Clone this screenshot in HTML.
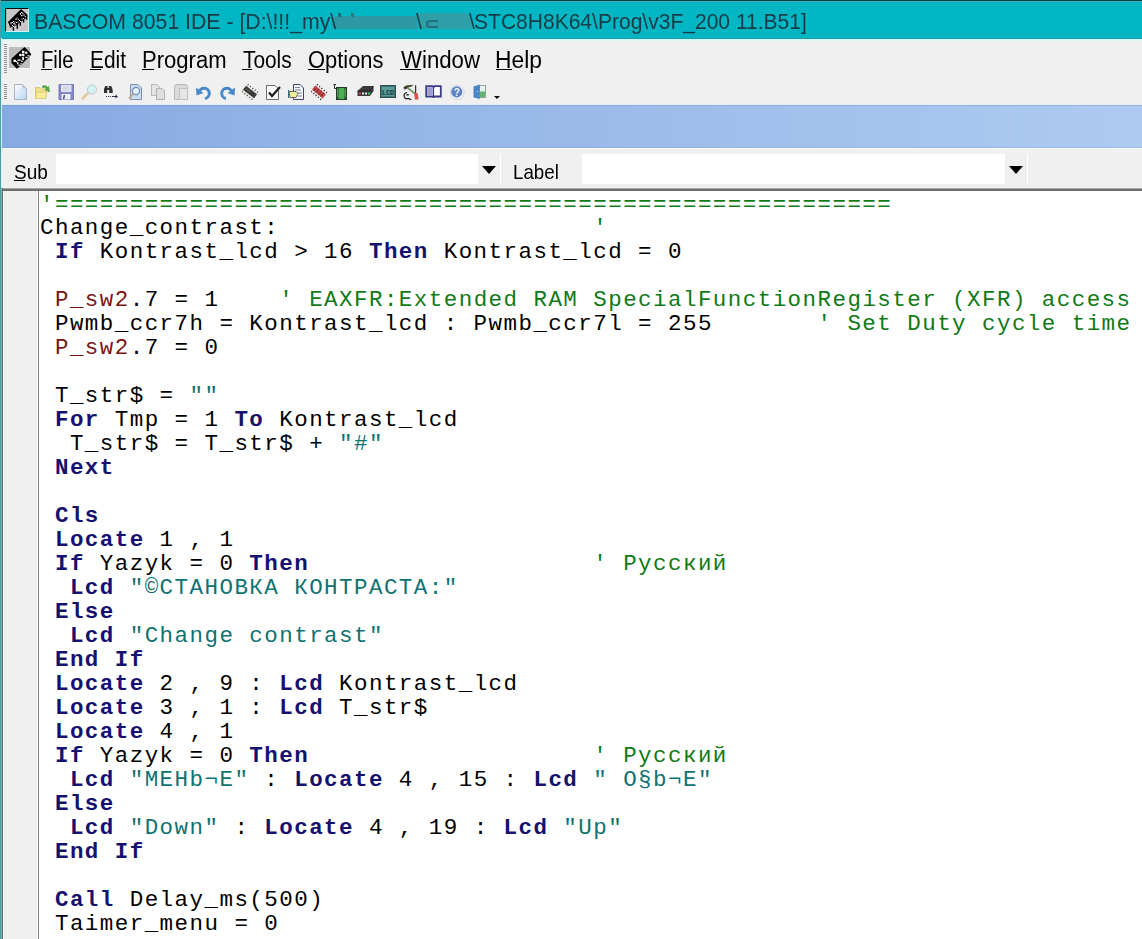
<!DOCTYPE html>
<html><head><meta charset="utf-8">
<style>
html,body{margin:0;padding:0;}
body{width:1142px;height:939px;overflow:hidden;position:relative;background:#f0f0f0;font-family:"Liberation Sans",sans-serif;}
.abs{position:absolute;}
#title{position:absolute;left:0;top:0;width:1142px;height:38px;background:linear-gradient(to bottom,#0a4048 0 1px,#3fb0b8 1px 2px,#0ab0be 2px 3px,#02b6c4 3px);}
#titletxt{position:absolute;left:35px;top:5px;font-size:21.5px;color:#173c47;white-space:nowrap;letter-spacing:-0.1px;}
#tline{position:absolute;left:0;top:38px;width:1142px;height:3px;background:linear-gradient(to bottom,#2b99a0 0 1px,#c8fcfe 1px 2px,#e4f4f8 2px 3px);}
#lborder{position:absolute;left:0;top:0;width:1px;height:939px;background:#4f9ea2;}
#lborder2{position:absolute;left:1px;top:38px;width:1px;height:150px;background:#c8f6fa;}
#lborder3{position:absolute;left:1px;top:188px;width:1px;height:751px;background:#76b2b4;}
.tx{position:absolute;line-height:1;white-space:nowrap;transform-origin:0 0;}
.ul{position:absolute;height:1px;background:#000;}
.u{text-decoration:underline;text-underline-offset:3px;text-decoration-thickness:1px;}
#band{position:absolute;left:2px;top:105px;width:1140px;height:43px;background:linear-gradient(to right,#87aae2,#aecaf1);}
#bandtop{position:absolute;left:2px;top:104px;width:1140px;height:1px;background:#e4eef8;}
#bandbot{position:absolute;left:2px;top:148px;width:1140px;height:1px;background:#f8fbfd;}
.combo{position:absolute;top:154px;height:30px;background:#fff;}
.btn{position:absolute;top:154px;height:30px;width:22px;background:#f0f0f0;border-right:1px solid #fff;}
.arrow{position:absolute;width:0;height:0;border-left:7px solid transparent;border-right:7px solid transparent;border-top:8px solid #000;}
.lbl{position:absolute;top:160px;font-size:19px;color:#000;}
#hl1{position:absolute;left:2px;top:188px;width:1140px;height:1px;background:#a8a8a8;}
#hl2{position:absolute;left:2px;top:189px;width:1140px;height:2px;background:#6e6e6e;}
#vl{position:absolute;left:2px;top:188px;width:1px;height:751px;background:#5e7076;}
#gutter{position:absolute;left:3px;top:191px;width:35px;height:748px;background:#efefef;border-left:1px solid #f6f9fe;box-sizing:border-box;}
#gline{position:absolute;left:37px;top:191px;width:2px;height:748px;background:linear-gradient(to right,#fff 0 1px,#7e7e7e 1px 2px);}
#editor{position:absolute;left:39px;top:191px;width:1103px;height:748px;background:#fff;overflow:hidden;}
#code{position:absolute;left:1px;top:0.5px;font-family:"Liberation Mono",monospace;font-size:22.5px;letter-spacing:1.45px;color:#000;white-space:pre;}
.ln{position:absolute;left:0;height:24px;line-height:24px;}
.k{color:#16116e;font-weight:bold;}
.s{color:#0f7272;}
.c{color:#0f7a16;}
.r{color:#7a1414;}
.grip{position:absolute;left:4px;width:3px;background:repeating-linear-gradient(to bottom,#8e8e8e 0 1px,transparent 1px 2px);}
.ico{position:absolute;top:84px;width:16px;height:16px;}
</style></head><body>
<div id="title"></div>
<div id="tline"></div>
<svg class="abs" style="left:5px;top:8px" width="24" height="24" viewBox="0 0 24 24">
<rect x="0" y="0" width="24" height="24" fill="#c8c8c8"/>
<path d="M0.5 24V0.5H24" fill="none" stroke="#0a0a0a" stroke-width="1.2"/><path d="M23.5 0.5V23.5H0.5" fill="none" stroke="#c8f4f8" stroke-width="1"/>
<path d="M3 14L16 1L22.3 6.8L22.3 9L9 19L5 18.5Z" fill="#000"/>
<g stroke="#000" stroke-width="1.4"><path d="M5.5 17V19.5M8.4 17V22.8M12.3 15V20.7M15.3 12V17.7M18.6 9V14.4M21.6 7V11.7"/></g>
<g fill="#fff"><rect x="15" y="5" width="1" height="1.8"/><rect x="16" y="4" width="1.5" height="1"/><rect x="17.5" y="5" width="1" height="1"/><rect x="16" y="7.2" width="1.6" height="1"/><rect x="18.5" y="6.2" width="1" height="1.6"/><rect x="19.8" y="8" width="1" height="1"/>
<rect x="10.5" y="10.5" width="1" height="1.6"/><rect x="11.5" y="9.6" width="1" height="1"/><rect x="12.8" y="10.8" width="1" height="1"/><rect x="14" y="12" width="1" height="1"/><rect x="15" y="13" width="1" height="1"/><rect x="16.5" y="10.5" width="1" height="1"/><rect x="18" y="10" width="1" height="1"/>
<rect x="8" y="13" width="1" height="1"/><rect x="9.5" y="13.5" width="1" height="1"/><rect x="11" y="14" width="1" height="1"/><rect x="12.5" y="13.5" width="1" height="1"/>
<rect x="5.6" y="14" width="1" height="2.2"/><rect x="7" y="14" width="1" height="1"/><rect x="8.2" y="15.2" width="2" height="1"/><rect x="9.6" y="16.2" width="1" height="1.4"/><rect x="7" y="17" width="1" height="1"/><rect x="8" y="18" width="1.6" height="1"/></g>
</svg>
<div class="abs" style="left:332px;top:16px;width:85px;height:13px;background:#2b98a3;filter:blur(0.7px);border-radius:6px 0 0 2px"></div>
<div class="abs" style="left:338px;top:13px;width:3px;height:4px;background:#1f6f78;filter:blur(0.5px)"></div>
<div class="abs" style="left:351px;top:13px;width:3px;height:4px;background:#2a7a82;filter:blur(0.6px)"></div>
<div class="abs" style="left:418px;top:13px;width:53px;height:16px;background:#2e9fa9;filter:blur(0.7px);border-radius:4px 8px 2px 2px"></div>
<div class="abs" style="left:426px;top:20px;width:12px;height:8px;border:2px solid #1f707a;border-right:none;border-radius:6px 0 0 6px;filter:blur(0.5px);box-sizing:border-box"></div>
<div class="tx" style="left:34.14px;top:9.7px;font-size:22.8px;color:#173c47;transform:scaleX(0.9317);">BASCOM 8051 IDE - [D:\!!!_my\</div><div class="tx" style="left:416px;top:9.7px;font-size:22.8px;color:#173c47;transform:scaleX(0.93)">\</div><div class="tx" style="left:469px;top:9.7px;font-size:22.8px;color:#173c47;transform:scaleX(0.93)">\</div><div class="tx" style="left:474.08px;top:9.7px;font-size:22.8px;color:#173c47;transform:scaleX(0.9226);">STC8H8K64\Prog\v3F_200 11.B51]</div>
<div id="lborder"></div><div id="lborder2"></div><div id="lborder3"></div>

<div class="grip" style="top:44px;height:29px"></div>
<svg class="abs" style="left:9px;top:47px" width="22" height="22" viewBox="0 0 22 22">
<rect x="0" y="0" width="22" height="22" fill="#bdbdbd"/><path d="M21.5 0V21.5H0" fill="none" stroke="#fafafa"/>
<path d="M2.5 11.5L15.5 0L22 6.5L22 8L8.5 21.5L7.5 21.5L2.5 16Z" fill="#000"/>
<g fill="#fff"><rect x="13" y="3.8" width="2.4" height="2.4"/><rect x="16.2" y="4.6" width="2.2" height="2.2"/><rect x="10.2" y="6.8" width="2.4" height="2.4"/><rect x="13" y="6.8" width="2.4" height="2.4"/>
<rect x="18.5" y="8.2" width="2" height="1.2"/><rect x="16.5" y="9.8" width="2" height="1.2"/><rect x="13.3" y="10" width="1.6" height="3.2"/><rect x="12" y="13.6" width="1.6" height="1.3"/><rect x="8.5" y="12.5" width="3" height="1.3"/>
<rect x="4.5" y="12.6" width="2.4" height="2.4"/><rect x="8" y="15.2" width="1.4" height="2.2"/><rect x="9.5" y="17.6" width="2" height="1.2"/><rect x="11.5" y="16.2" width="1.2" height="1.2"/><rect x="7" y="14" width="1.2" height="1.2"/></g>
</svg>
<div class="tx" style="left:40.86px;top:49.2px;font-size:23.3px;color:#000;transform:scaleX(0.8686);">File</div>
<div class="ul" style="left:41px;top:69px;width:11px"></div>
<div class="tx" style="left:89.81px;top:49.2px;font-size:23.3px;color:#000;transform:scaleX(0.8974);">Edit</div>
<div class="ul" style="left:90.3px;top:69px;width:10.5px"></div>
<div class="tx" style="left:141.61px;top:49.2px;font-size:23.3px;color:#000;transform:scaleX(0.9465);">Program</div>
<div class="ul" style="left:142px;top:69px;width:12px"></div>
<div class="tx" style="left:242.7px;top:49.2px;font-size:23.3px;color:#000;transform:scaleX(0.8944);">Tools</div>
<div class="ul" style="left:242px;top:69px;width:9.800000000000011px"></div>
<div class="tx" style="left:307.56px;top:49.2px;font-size:23.3px;color:#000;transform:scaleX(0.9405);">Options</div>
<div class="ul" style="left:307.8px;top:69px;width:16.80000000000001px"></div>
<div class="tx" style="left:400.6px;top:49.2px;font-size:23.3px;color:#000;transform:scaleX(0.953);">Window</div>
<div class="ul" style="left:399.9px;top:69px;width:21.0px"></div>
<div class="tx" style="left:494.64px;top:49.2px;font-size:23.3px;color:#000;transform:scaleX(0.98);">Help</div>
<div class="ul" style="left:495.8px;top:69px;width:16.19999999999999px"></div>


<div class="grip" style="top:84px;height:15px"></div>
<svg class="abs" style="left:13px;top:84px" width="16" height="16" viewBox="0 0 16 16"><defs><linearGradient id="gd" x1="0" y1="0" x2="1" y2="1"><stop offset="0" stop-color="#ffffff"/><stop offset="1" stop-color="#b4d2f2"/></linearGradient></defs>
<path d="M1.5 0.5H9.5L13.5 4.5V15.5H1.5Z" fill="url(#gd)" stroke="#a4acbc" stroke-width="0.9"/><path d="M9.5 0.5V4.5H13.5Z" fill="#b8c0d0"/></svg>
<svg class="abs" style="left:35px;top:84px" width="16" height="16" viewBox="0 0 16 16"><path d="M0.5 3.5H5L6.5 5H11V14.5H0.5Z" fill="#efe08a" stroke="#d8c870"/>
<path d="M1.5 8H12L10.5 14.5H0.5Z" fill="#f8ec98" stroke="#d8c870" stroke-width="0.8"/>
<path d="M7 2 C9 0.5,11.5 1,12.5 3 L14 2 L15 8.5 L9.5 6 L11 5 C10 3.5,8.5 3.5,7 4Z" fill="#58a848"/></svg>
<svg class="abs" style="left:58px;top:84px" width="16" height="16" viewBox="0 0 16 16"><path d="M1 0.5H15.5V15.5H1Z" fill="#8286c6" stroke="#7074b8" stroke-width="0.9"/>
<rect x="3" y="0.8" width="10.5" height="7.2" fill="#e2e2ee"/><path d="M5 3h6M5 5h6" stroke="#c8c8d8" stroke-width="0.8"/><rect x="3.5" y="10" width="9" height="5.5" fill="#eeeef4"/><path d="M6.5 11L5.5 15" stroke="#505890" stroke-width="1.5"/></svg>
<svg class="abs" style="left:81px;top:84px" width="17" height="16" viewBox="0 0 17 16"><line x1="1.8" y1="14.2" x2="6.5" y2="9.5" stroke="#e8c8a0" stroke-width="3" stroke-linecap="round"/>
<circle cx="11" cy="5.5" r="4.6" fill="#d4f0f4" stroke="#b4ccd4" stroke-width="1"/></svg>
<svg class="abs" style="left:103px;top:84px" width="17" height="16" viewBox="0 0 17 16"><path d="M1 8.5V5L2.2 2H4.5V4H5.8V2H8.2L9.5 5V8.5H6.5V6H4V8.5Z" fill="#303030"/><rect x="1" y="6.5" width="3.2" height="2.5" fill="#303030"/><rect x="6.3" y="6.5" width="3.2" height="2.5" fill="#303030"/>
<path d="M3 12.5h1M5 12.5h1M7 12.5h1M9 12.5h4" stroke="#303050" stroke-width="1"/><path d="M12.5 10.5L15 12.5L12.5 14.5Z" fill="#303050"/></svg>
<svg class="abs" style="left:128px;top:84px" width="15" height="16" viewBox="0 0 15 16"><path d="M2.5 0.5H10L13.5 4V15.5H2.5Z" fill="#c8dcf2" stroke="#8090a8"/>
<circle cx="8" cy="7" r="3.6" fill="#e8f4fc" stroke="#7090b0" stroke-width="1.2"/><line x1="1" y1="14.5" x2="5.3" y2="9.8" stroke="#c0a080" stroke-width="1.6"/></svg>
<svg class="abs" style="left:151px;top:84px" width="15" height="16" viewBox="0 0 15 16"><path d="M0.5 0.5H6L8.5 3V11.5H0.5Z" fill="#e4e4e4" stroke="#b8b8b8"/>
<path d="M5.5 4.5H11L13.5 7V15.5H5.5Z" fill="#dedede" stroke="#b0b0b0"/></svg>
<svg class="abs" style="left:174px;top:84px" width="15" height="16" viewBox="0 0 15 16"><path d="M0.5 2.5Q0.5 0.5 3 0.5H11Q13.5 0.5 13.5 2.5V15.5H0.5Z" fill="#dadada" stroke="#b8b8b8"/>
<rect x="5.5" y="4.5" width="8" height="11" fill="#e6e6e6" stroke="#c0c0c0"/></svg>
<svg class="abs" style="left:196px;top:86px" width="16" height="14" viewBox="0 0 16 14"><path d="M3 6.5 A5.2 5.2 0 1 1 9 12.5" fill="none" stroke="#4a88cc" stroke-width="3"/><path d="M0 1.5 L0.5 9.5 L7.5 7Z" fill="#4a88cc"/></svg>
<svg class="abs" style="left:219px;top:86px" width="16" height="14" viewBox="0 0 16 14"><path d="M13 6.5 A5.2 5.2 0 1 0 7 12.5" fill="none" stroke="#4a88cc" stroke-width="3"/><path d="M16 1.5 L15.5 9.5 L8.5 7Z" fill="#4a88cc"/></svg>
<svg class="abs" style="left:242px;top:84px" width="16" height="16" viewBox="0 0 16 16"><g transform="rotate(38 8 8)"><rect x="1" y="5.5" width="14" height="5" fill="#3a3a3a"/><rect x="3" y="7" width="5" height="1.5" fill="#5a5a5a"/>
<path d="M1.5 3.5h1M4.5 3.5h1M7.5 3.5h1M10.5 3.5h1M13.5 3.5h1M1.5 12.5h1M4.5 12.5h1M7.5 12.5h1M10.5 12.5h1M13.5 12.5h1" stroke="#504a30" stroke-width="1.6"/></g></svg>
<svg class="abs" style="left:266px;top:84px" width="15" height="16" viewBox="0 0 15 16"><path d="M0.5 1.5H9L12.5 5V15.5H0.5Z" fill="#fafafa" stroke="#707070"/>
<path d="M3 8.5L6 12L14 3" fill="none" stroke="#202020" stroke-width="2.2"/></svg>
<svg class="abs" style="left:288px;top:84px" width="16" height="16" viewBox="0 0 16 16"><path d="M5.5 0.5H12L15.5 4V15.5H5.5Z" fill="#f8f8f8" stroke="#404060"/>
<path d="M7 3.5h5M7 6h6M9 9h5M10 12h4" stroke="#7080a0" stroke-width="1"/>
<path d="M1 7.5H8L10 9.5L8 13.5H2Z" fill="#f0ec90" stroke="#404060" stroke-width="0.8"/><path d="M0.5 6V14" stroke="#307070" stroke-width="1.2"/></svg>
<svg class="abs" style="left:311px;top:84px" width="16" height="16" viewBox="0 0 16 16"><g transform="rotate(40 8 8)"><rect x="1" y="5.5" width="14" height="5" fill="#c04848"/>
<path d="M3 5.5V10.5M6 5.5V10.5M9 5.5V10.5M12 5.5V10.5" stroke="#7a2020" stroke-width="0.9"/>
<path d="M1.5 3.5h1M4.5 3.5h1M7.5 3.5h1M10.5 3.5h1M13.5 3.5h1M1.5 12.5h1M4.5 12.5h1M7.5 12.5h1M10.5 12.5h1M13.5 12.5h1" stroke="#402020" stroke-width="1.6"/></g></svg>
<svg class="abs" style="left:333px;top:84px" width="15" height="16" viewBox="0 0 15 16"><path d="M1.5 0.5V4.5H4" fill="none" stroke="#303030" stroke-width="1"/><path d="M0.5 0.5H3" stroke="#303030"/>
<rect x="3.5" y="3.5" width="10" height="12" fill="#2f6a38" stroke="#243a24"/><rect x="6" y="4" width="5" height="11" fill="#4cb050"/>
<path d="M4 6h1.5M4 8h1.5M4 10h1.5M4 12h1.5M11.5 6h1.5M11.5 8h1.5M11.5 10h1.5M11.5 12h1.5" stroke="#8ad890" stroke-width="0.8"/></svg>
<svg class="abs" style="left:357px;top:85px" width="17" height="12" viewBox="0 0 17 12"><path d="M0.5 6L6 1H16.5V6L13 11H0.5Z" fill="#3a3a3a"/><path d="M0.5 6H13L16.5 1" fill="none" stroke="#202020"/>
<rect x="2" y="7.5" width="2" height="2" fill="#e04040"/><rect x="5" y="7.5" width="2" height="2" fill="#e8e8e8"/><rect x="8" y="7.5" width="2" height="2" fill="#e8e8e8"/><rect x="11" y="7.5" width="2" height="2" fill="#40c060"/></svg>
<svg class="abs" style="left:380px;top:85px" width="16" height="13" viewBox="0 0 16 13"><rect x="0.5" y="0.5" width="15" height="12" fill="#3f7a7a" stroke="#2d4d4d"/><rect x="2" y="2" width="12" height="9" fill="#5a9a9a"/>
<text x="8" y="9.5" font-family="Liberation Mono" font-size="7" font-weight="bold" text-anchor="middle" fill="#1a3a3a">LCD</text></svg>
<svg class="abs" style="left:402px;top:84px" width="18" height="16" viewBox="0 0 18 16"><path d="M4.5 3L12.8 9.5" stroke="#78a070" stroke-width="2.2"/>
<path d="M1.5 3.5L4 1.5L10.5 0.8L10.5 2.2L6 3.5L4 5Z" fill="#4a4a30"/><circle cx="3" cy="4.2" r="1" fill="none" stroke="#202020" stroke-width="0.8"/>
<path d="M13.6 1.2V9" stroke="#303030" stroke-width="1.2"/><path d="M12 9H15.5L16.6 15.6H13Z" fill="#d85050"/>
<path d="M5 8.5Q2 9 2 12Q2.5 15.5 6.5 14.5L9.2 15.8M4.5 11.5Q5.5 10 7 11" fill="none" stroke="#202020" stroke-width="1.2"/></svg>
<svg class="abs" style="left:425px;top:85px" width="17" height="13" viewBox="0 0 17 13"><path d="M1.2 1.2H7.5L8.5 2L9.5 1.2H15.8V11.5H9.5L8.5 12.3L7.5 11.5H1.2Z" fill="#fff" stroke="#3a3a88" stroke-width="1.8"/>
<rect x="2.2" y="2.2" width="5.5" height="8.5" fill="#a0a0cc"/><path d="M8.5 2V12" stroke="#3a3a88" stroke-width="1.2"/></svg>
<svg class="abs" style="left:449px;top:85px" width="17" height="15" viewBox="0 0 17 15"><circle cx="8.3" cy="7.3" r="6.9" fill="#fafafa" stroke="#c8c8d0" stroke-width="0.8"/><circle cx="7.8" cy="6.9" r="5.6" fill="#5b82c4"/>
<text x="7.8" y="10.8" font-family="Liberation Sans" font-size="10" font-weight="bold" text-anchor="middle" fill="#f4f8ff">?</text></svg>
<svg class="abs" style="left:473px;top:84px" width="14" height="15" viewBox="0 0 14 15"><rect x="6.5" y="1.5" width="6" height="12" fill="#e4f4f4" stroke="#909898" stroke-width="0.9"/><rect x="7" y="7.5" width="5.2" height="5.6" fill="#62b46e"/>
<path d="M0.5 2.5L6.8 0.5V15L0.5 13.5Z" fill="#4a84c8"/><circle cx="4.5" cy="7.5" r="0.6" fill="#e0f0ff"/></svg>
<svg class="abs" style="left:494px;top:96px" width="7" height="4" viewBox="0 0 7 4"><path d="M0 0H6L3 3Z" fill="#000"/></svg>

<div id="bandtop"></div>
<div id="band"></div>
<div id="bandbot"></div>
<div class="abs" style="left:2px;top:105px;width:1140px;height:1px;background:rgba(80,100,130,0.18)"></div>
<div class="abs" style="left:2px;top:147px;width:1140px;height:1px;background:rgba(80,100,130,0.15)"></div>

<div class="tx" style="left:13.85px;top:161.6px;font-size:20.06px;color:#000;transform:scaleX(0.95);">Sub</div><div class="ul" style="left:14px;top:180px;width:11px"></div>
<div class="combo" style="left:56px;width:422px"></div>
<div class="btn" style="left:478px"><div class="arrow" style="left:4px;top:12px"></div></div>
<div class="tx" style="left:512.63px;top:161.6px;font-size:20.06px;color:#000;transform:scaleX(0.9348);">Label</div>
<div class="combo" style="left:582px;width:423px"></div>
<div class="btn" style="left:1005px"><div class="arrow" style="left:4px;top:12px"></div></div>

<div id="hl1"></div><div id="hl2"></div><div id="vl"></div>
<div id="gutter"></div><div id="gline"></div>
<div id="editor"><div id="code">
<div class="ln" style="top:1px"><span class="c">&#x27;========================================================</span></div>
<div class="ln" style="top:24px">Change_contrast:                     <span class="c">&#x27;</span></div>
<div class="ln" style="top:48px"> <span class="k">If</span> Kontrast_lcd &gt; 16 <span class="k">Then</span> Kontrast_lcd = 0</div>
<div class="ln" style="top:72px"></div>
<div class="ln" style="top:96px"> <span class="r">P_sw2</span>.7 = 1    <span class="c">&#x27; EAXFR:Extended RAM SpecialFunctionRegister (XFR) access</span></div>
<div class="ln" style="top:120px"> Pwmb_ccr7h = Kontrast_lcd : Pwmb_ccr7l = 255       <span class="c">&#x27; Set Duty cycle time</span></div>
<div class="ln" style="top:144px"> <span class="r">P_sw2</span>.7 = 0</div>
<div class="ln" style="top:168px"></div>
<div class="ln" style="top:192px"> T_str$ = <span class="s">&quot;&quot;</span></div>
<div class="ln" style="top:216px"> <span class="k">For</span> Tmp = 1 <span class="k">To</span> Kontrast_lcd</div>
<div class="ln" style="top:240px">  T_str$ = T_str$ + <span class="s">&quot;#&quot;</span></div>
<div class="ln" style="top:264px"> <span class="k">Next</span></div>
<div class="ln" style="top:288px"></div>
<div class="ln" style="top:312px"> <span class="k">Cls</span></div>
<div class="ln" style="top:336px"> <span class="k">Locate</span> 1 , 1</div>
<div class="ln" style="top:360px"> <span class="k">If</span> Yazyk = 0 <span class="k">Then</span>                   <span class="c">&#x27; Русский</span></div>
<div class="ln" style="top:384px">  <span class="k">Lcd</span> <span class="s">&quot;©СТАНОВКА КОНТРАСТА:&quot;</span></div>
<div class="ln" style="top:408px"> <span class="k">Else</span></div>
<div class="ln" style="top:432px">  <span class="k">Lcd</span> <span class="s">&quot;Change contrast&quot;</span></div>
<div class="ln" style="top:456px"> <span class="k">End If</span></div>
<div class="ln" style="top:480px"> <span class="k">Locate</span> 2 , 9 : <span class="k">Lcd</span> Kontrast_lcd</div>
<div class="ln" style="top:504px"> <span class="k">Locate</span> 3 , 1 : <span class="k">Lcd</span> T_str$</div>
<div class="ln" style="top:528px"> <span class="k">Locate</span> 4 , 1</div>
<div class="ln" style="top:552px"> <span class="k">If</span> Yazyk = 0 <span class="k">Then</span>                   <span class="c">&#x27; Русский</span></div>
<div class="ln" style="top:576px">  <span class="k">Lcd</span> <span class="s">&quot;МЕНb¬Е&quot;</span> : <span class="k">Locate</span> 4 , 15 : <span class="k">Lcd</span> <span class="s">&quot; О§b¬Е&quot;</span></div>
<div class="ln" style="top:600px"> <span class="k">Else</span></div>
<div class="ln" style="top:624px">  <span class="k">Lcd</span> <span class="s">&quot;Down&quot;</span> : <span class="k">Locate</span> 4 , 19 : <span class="k">Lcd</span> <span class="s">&quot;Up&quot;</span></div>
<div class="ln" style="top:648px"> <span class="k">End If</span></div>
<div class="ln" style="top:672px"></div>
<div class="ln" style="top:696px"> <span class="k">Call</span> Delay_ms(500)</div>
<div class="ln" style="top:720px"> Taimer_menu = 0</div>
</div></div>
</body></html>
